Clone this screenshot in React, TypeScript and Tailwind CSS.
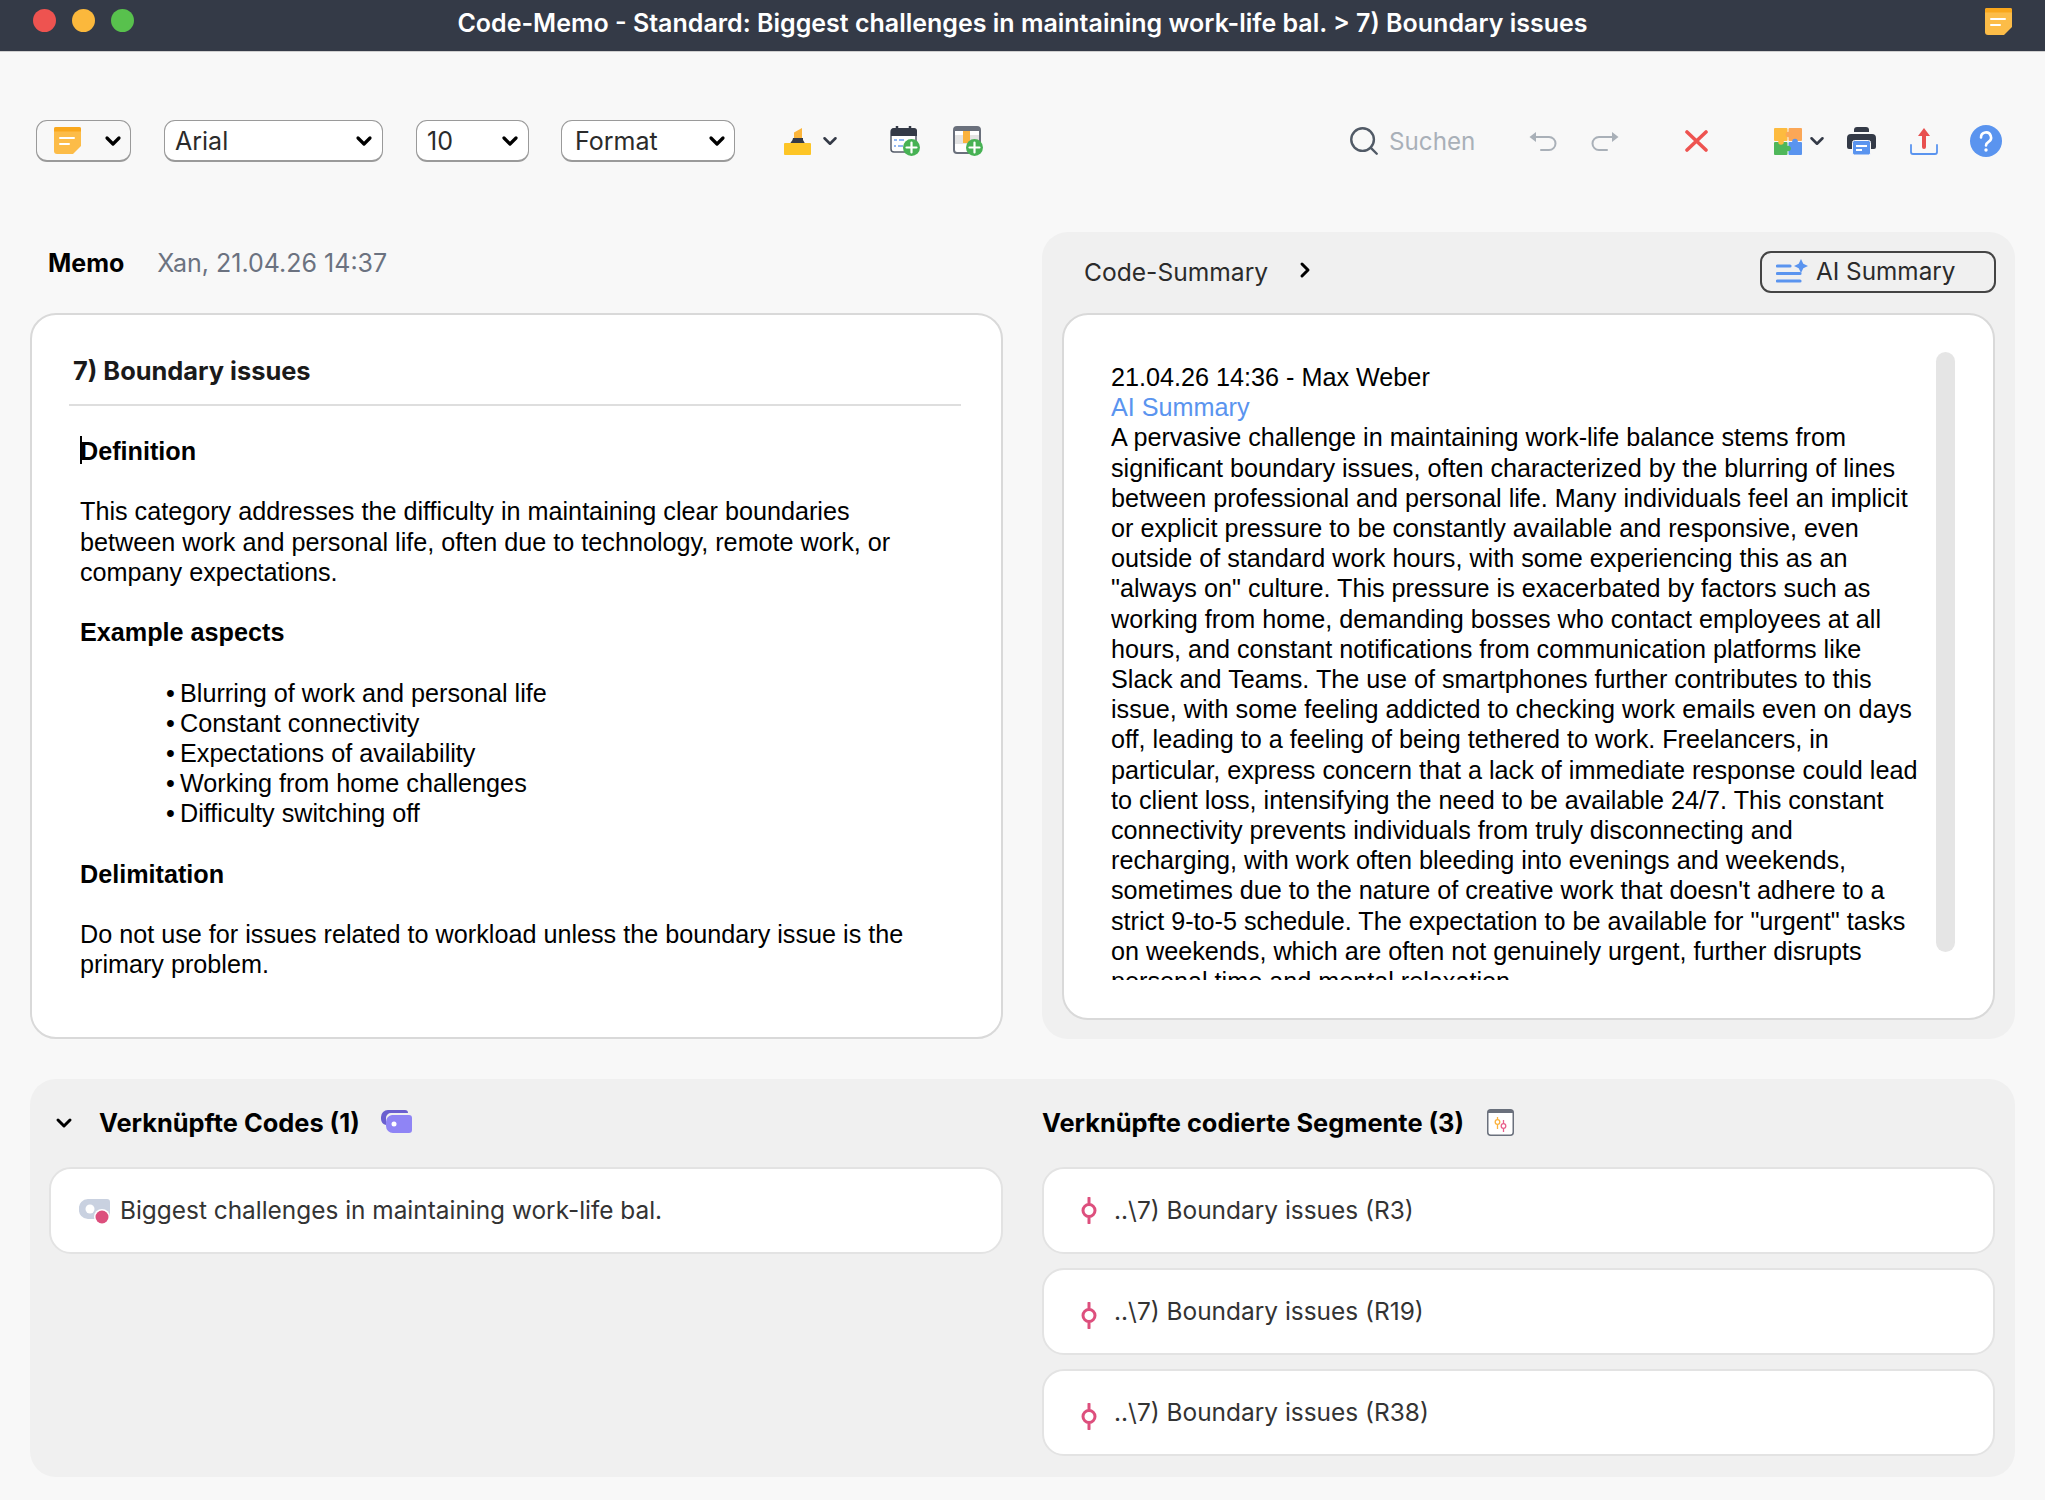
import React from 'react';
import { ChevronDown, ChevronRight, Search } from 'lucide-react';

const NoteIcon = ({ className }: { className?: string }) => (
  <svg viewBox="0 0 27 27" className={className}>
    <path d="M2 0h23a2 2 0 0 1 2 2v17l-8 8H3a3 3 0 0 1-3-3V2a2 2 0 0 1 2-2z" fill="#fcbc48" />
    <path d="M2 0h23a2 2 0 0 1 2 2v2.500H0V2a2 2 0 0 1 2-2z" fill="#f9a71c" />
    <path d="M6 11h14M6 17h9" stroke="#fff" strokeWidth="2" strokeLinecap="round" />
  </svg>
);

const Highlighter = () => (
  <svg viewBox="0 0 27 27" className="w-[27px] h-[27px]">
    <path d="M10 10V4.500L18 0v10z" fill="#fcb53b" />
    <path d="M9 10h10v2l2 3.500H6L8.500 12z" fill="#343a47" />
    <rect x="0" y="15" width="27" height="12" rx="1" fill="#fdc526" />
  </svg>
);

const CalendarAdd = () => (
  <svg viewBox="0 0 30 30" className="w-[30px] h-[30px]">
    <rect x="1" y="3" width="25" height="23" rx="3" fill="#fff" stroke="#555c69" strokeWidth="1.500" />
    <path d="M4 2h20a3 3 0 0 1 3 3v5H1V5a3 3 0 0 1 3-3z" fill="#343a47" />
    <path d="M7 0v4M20 0v4" stroke="#343a47" strokeWidth="2.500" strokeLinecap="round" />
    <path d="M4 14h3M9 14h5M4 20h2M8 20h5" stroke="#6ea0f0" strokeWidth="1.500" />
    <circle cx="21.500" cy="21.500" r="8.500" fill="#47b254" />
    <path d="M21.500 16.500v10M16.500 21.500h10" stroke="#fff" strokeWidth="2.200" strokeLinecap="round" />
  </svg>
);

const WindowAdd = () => (
  <svg viewBox="0 0 30 30" className="w-[30px] h-[30px]">
    <rect x="1" y="1" width="26" height="26" rx="3" fill="#fff" stroke="#6a707c" strokeWidth="2" />
    <rect x="2" y="9" width="24" height="9" fill="#e4e4e4" />
    <rect x="10" y="3" width="7" height="14" fill="#fbb23c" />
    <path d="M4 1h20a3 3 0 0 1 3 3v1H1V4a3 3 0 0 1 3-3z" fill="#6a707c" />
    <circle cx="21.500" cy="21.500" r="8.500" fill="#47b254" />
    <path d="M21.500 16.500v10M16.500 21.500h10" stroke="#fff" strokeWidth="2.200" strokeLinecap="round" />
  </svg>
);

const UndoIcon = ({ flip }: { flip?: boolean }) => (
  <svg viewBox="0 0 28 20" className={flip ? 'w-[28px] h-[20px] -scale-x-100' : 'w-[28px] h-[20px]'}>
    <path d="M0.500 6L7 1v10z" fill="#a9b0b8" />
    <path d="M6 6h14a6.500 6.500 0 0 1 0 13h-8" fill="none" stroke="#a9b0b8" strokeWidth="2" strokeLinecap="round" />
  </svg>
);

const CloseIcon = () => (
  <svg viewBox="0 0 23 22" className="w-[23px] h-[22px]">
    <path d="M2 2l19 18M21 2L2 20" stroke="#ee5350" strokeWidth="3.600" strokeLinecap="round" />
  </svg>
);

const PuzzleIcon = () => (
  <svg viewBox="0 0 28 27" className="w-[28px] h-[27px]">
    <rect x="0" y="0" width="13.500" height="13" rx="1" fill="#fdbb3f" />
    <rect x="14.500" y="0" width="13.500" height="13" rx="1" fill="#fba757" />
    <rect x="0" y="14" width="13.500" height="13" rx="1" fill="#4fb75a" />
    <rect x="14.500" y="14" width="13.500" height="13" rx="1" fill="#5a94ef" />
    <circle cx="14.500" cy="6.500" r="2.800" fill="#fba757" />
    <circle cx="7" cy="14" r="2.800" fill="#fdbb3f" />
    <circle cx="21" cy="13.500" r="2.800" fill="#5a94ef" />
    <circle cx="14" cy="20.500" r="2.800" fill="#4fb75a" />
  </svg>
);

const PrintIcon = () => (
  <svg viewBox="0 0 29 28" className="w-[29px] h-[28px]">
    <path d="M7 3a3 3 0 0 1 3-3h9a3 3 0 0 1 3 3v2H7z" fill="#343a47" />
    <path d="M4 7h21a4 4 0 0 1 4 4v9a2 2 0 0 1-2 2h-4v-7H6v7H2a2 2 0 0 1-2-2v-9a4 4 0 0 1 4-4z" fill="#343a47" />
    <rect x="5.500" y="13.500" width="18" height="14.500" rx="2" fill="#5a94ef" stroke="#f8f8f8" strokeWidth="1" />
    <path d="M9 19h11M9 23h6" stroke="#fff" strokeWidth="1.800" />
  </svg>
);

const UploadIcon = () => (
  <svg viewBox="0 0 28 27" className="w-[28px] h-[27px]">
    <path d="M1 17v7a2 2 0 0 0 2 2h22a2 2 0 0 0 2-2v-7" fill="none" stroke="#5a94ef" strokeWidth="1.800" strokeLinecap="round" />
    <path d="M14 0l6 8h-4v11a2 2 0 0 1-4 0V8H8z" fill="#e8504f" />
  </svg>
);

const HelpIcon = () => (
  <svg viewBox="0 0 32 32" className="w-[32px] h-[32px]">
    <circle cx="16" cy="16" r="16" fill="#5a94ef" />
    <path d="M11 12.500a5 5 0 1 1 7.500 4.300c-1.700 1-2.500 1.900-2.500 3.700" fill="none" stroke="#fff" strokeWidth="2.600" strokeLinecap="round" />
    <circle cx="16" cy="25" r="1.700" fill="#fff" />
  </svg>
);

const SparkLines = () => (
  <svg viewBox="0 0 32 25" className="w-[32px] h-[25px]">
    <path d="M1.500 7H14M1.500 14.500H24M1.500 22H24" stroke="#5a94ef" strokeWidth="3.200" strokeLinecap="round" />
    <path d="M25 0l2.300 4.700L32 7l-4.700 2.300L25 14l-2.300-4.700L18 7l4.700-2.300z" fill="#5a94ef" />
  </svg>
);

const CodesIcon = () => (
  <svg viewBox="0 0 31 23" className="w-[31px] h-[23px]">
    <path d="M7 0h17a3 3 0 0 1 3 3H10a5 5 0 0 0-5 5v7a7 7 0 0 1-5-7V7a7 7 0 0 1 7-7z" fill="#6a5fcf" />
    <path d="M11 5h17a3 3 0 0 1 3 3v12a3 3 0 0 1-3 3H12a7 7 0 0 1-7-7v-4a7 7 0 0 1 6-7z" fill="#8f84f5" />
    <circle cx="13" cy="14" r="2.500" fill="#fff" />
  </svg>
);

const CodeTag = () => (
  <svg viewBox="0 0 31 26" className="w-[31px] h-[26px]">
    <path d="M9 1h19a3 3 0 0 1 3 3v14a3 3 0 0 1-3 3H9A9 9 0 0 1 0 11a9 9 0 0 1 9-10z" fill="#c9d1e0" />
    <circle cx="11" cy="11" r="4.500" fill="#fff" />
    <circle cx="23" cy="19" r="8" fill="#fff" />
    <circle cx="23" cy="19" r="6.500" fill="#dc4f7d" />
  </svg>
);

const SegmentPin = ({ className }: { className?: string }) => (
  <svg viewBox="0 0 16 27" className={`w-[16px] h-[27px] ${className ?? ''}`}>
    <path d="M8 1v5M8 21v5" stroke="#dd4f7d" strokeWidth="3" strokeLinecap="round" />
    <circle cx="8" cy="13.500" r="6" fill="none" stroke="#dd4f7d" strokeWidth="3" />
  </svg>
);

const SegmentsIcon = () => (
  <svg viewBox="0 0 27 27" className="w-[27px] h-[27px]">
    <rect x="0.750" y="0.750" width="25.500" height="25.500" rx="3" fill="#fff" stroke="#6a707c" strokeWidth="1.500" />
    <path d="M3 0.750h21a2.500 2.500 0 0 1 2.250 2.250v1H0.750V3A2.500 2.500 0 0 1 3 0.750z" fill="#6a707c" />
    <path d="M10.500 8v12" stroke="#fbb23c" strokeWidth="1.300" />
    <circle cx="10.500" cy="13" r="2.300" fill="#fff" stroke="#fbb23c" strokeWidth="1.300" />
    <path d="M16.500 11v12" stroke="#e8608b" strokeWidth="1.300" />
    <circle cx="16.500" cy="17" r="2.300" fill="#fff" stroke="#e8608b" strokeWidth="1.300" />
  </svg>
);

const summaryLines = [
  'A pervasive challenge in maintaining work-life balance stems from',
  'significant boundary issues, often characterized by the blurring of lines',
  'between professional and personal life. Many individuals feel an implicit',
  'or explicit pressure to be constantly available and responsive, even',
  'outside of standard work hours, with some experiencing this as an',
  '"always on" culture. This pressure is exacerbated by factors such as',
  'working from home, demanding bosses who contact employees at all',
  'hours, and constant notifications from communication platforms like',
  'Slack and Teams. The use of smartphones further contributes to this',
  'issue, with some feeling addicted to checking work emails even on days',
  'off, leading to a feeling of being tethered to work. Freelancers, in',
  'particular, express concern that a lack of immediate response could lead',
  'to client loss, intensifying the need to be available 24/7. This constant',
  'connectivity prevents individuals from truly disconnecting and',
  'recharging, with work often bleeding into evenings and weekends,',
  "sometimes due to the nature of creative work that doesn't adhere to a",
  'strict 9-to-5 schedule. The expectation to be available for "urgent" tasks',
  'on weekends, which are often not genuinely urgent, further disrupts',
  'personal time and mental relaxation.',
];

const aspects = [
  'Blurring of work and personal life',
  'Constant connectivity',
  'Expectations of availability',
  'Working from home challenges',
  'Difficulty switching off',
];

const Dropdown = ({ label, className }: { label: string; className: string }) => (
  <div className={`h-[42px] flex items-center justify-between bg-white rounded-[11px] border border-[#9a9a9a] border-b-2 text-[25px] text-[#2b2b2b] ${className}`}>
    <span className="mt-[2px]">{label}</span>
    <ChevronDown className="w-[24px] h-[24px] text-black" strokeWidth={3.200} />
  </div>
);

export default function App() {
  return (
    <div className="w-[2045px] h-[1500px] bg-[#f8f8f8] font-['Inter',sans-serif] overflow-hidden">
      {/* title bar */}
      <div className="relative h-[52px] bg-[#343a47] border-b border-[#d0d0d0] flex items-center justify-center">
        <div className="absolute left-[33px] top-[9px] flex gap-[16px]">
          <span className="w-[23px] h-[23px] rounded-full bg-[#ee5350]" />
          <span className="w-[23px] h-[23px] rounded-full bg-[#fbb83c]" />
          <span className="w-[23px] h-[23px] rounded-full bg-[#58c14d]" />
        </div>
        <span className="-mt-[3px] text-[25px] font-semibold text-white whitespace-nowrap">
          Code-Memo - Standard: Biggest challenges in maintaining work-life bal. &gt; 7) Boundary issues
        </span>
        <NoteIcon className="absolute left-[1985px] top-[8px] w-[27px] h-[27px]" />
      </div>

      {/* toolbar */}
      <div className="h-[180px] pb-[2px] flex items-center pl-[36px]">
        <div className="w-[95px] h-[42px] flex items-center bg-[#f8f8f8] rounded-[11px] border border-[#9a9a9a] border-b-2 pl-[17px]">
          <NoteIcon className="w-[27px] h-[27px]" />
          <ChevronDown className="ml-[20px] w-[24px] h-[24px] text-black" strokeWidth={3.200} />
        </div>
        <Dropdown label="Arial" className="ml-[33px] w-[219px] pl-[10px] pr-[6px]" />
        <Dropdown label="10" className="ml-[33px] w-[113px] pl-[10px] pr-[6px]" />
        <Dropdown label="Format" className="ml-[32px] w-[174px] pl-[13px] pr-[5px]" />
        <div className="ml-[49px]"><Highlighter /></div>
        <ChevronDown className="ml-[8px] w-[22px] h-[22px] text-[#343a47]" strokeWidth={2.800} />
        <div className="ml-[49px]"><CalendarAdd /></div>
        <div className="ml-[33px]"><WindowAdd /></div>
        <Search className="ml-[364px] w-[34px] h-[34px] text-[#515a66]" strokeWidth={1.700} />
        <span className="ml-[8px] mt-[2px] text-[24.200px] text-[#a9b0b8]">Suchen</span>
        <div className="ml-[54px]"><UndoIcon /></div>
        <div className="ml-[34px]"><UndoIcon flip /></div>
        <div className="ml-[66px]"><CloseIcon /></div>
        <div className="ml-[66px]"><PuzzleIcon /></div>
        <ChevronDown className="ml-[4px] w-[22px] h-[22px] text-[#343a47]" strokeWidth={2.800} />
        <div className="ml-[19px]"><PrintIcon /></div>
        <div className="ml-[34px]"><UploadIcon /></div>
        <div className="ml-[32px]"><HelpIcon /></div>
      </div>

      {/* memo + summary */}
      <div className="px-[30px] grid grid-cols-[973px_973px] gap-x-[39px]">
        <div className="h-[807px]">
          <div className="h-[81px] pt-[13px] pl-[18px] flex items-baseline gap-[33px]">
            <span className="text-[25px] font-bold text-black">Memo</span>
            <span className="text-[25px] text-[#6b7280]">Xan, 21.04.26 14:37</span>
          </div>
          <div className="h-[726px] bg-white rounded-[26px] border-2 border-[#d9d9d9] pt-[38px]">
            <div className="pl-[41px] text-[25.400px] leading-[36px] font-bold text-[#1a1a1a]">7) Boundary issues</div>
            <div className="mt-[15px] ml-[37px] w-[892px] border-t-2 border-[#dedede]" />
            <div className="mt-[30px] pl-[48px] font-['Liberation_Sans',Arial,sans-serif] text-[25.200px] leading-[30.200px] text-black">
              <p className="font-bold"><span className="inline-block w-[2px] h-[28px] -mr-[2px] bg-black align-top" />Definition</p>
              <p className="mt-[30.200px] whitespace-nowrap">This category addresses the difficulty in maintaining clear boundaries<br />between work and personal life, often due to technology, remote work, or<br />company expectations.</p>
              <p className="mt-[30.200px] font-bold">Example aspects</p>
              <ul className="mt-[30.200px] pl-[86px]">
                {aspects.map(a => (
                  <li key={a} className="flex"><span className="w-[14px]">•</span>{a}</li>
                ))}
              </ul>
              <p className="mt-[30.200px] font-bold">Delimitation</p>
              <p className="mt-[30.200px] whitespace-nowrap">Do not use for issues related to workload unless the boundary issue is the<br />primary problem.</p>
            </div>
          </div>
        </div>

        <div className="h-[807px] bg-[#f0f0f0] rounded-[26px] px-[20px]">
          <div className="h-[81px] flex items-center">
            <span className="ml-[22px] text-[24.600px] text-[#2b2b2b]">Code-Summary</span>
            <ChevronRight className="ml-[25px] -mt-[5px] w-[24px] h-[24px] text-black" strokeWidth={3} />
            <div className="ml-auto mr-[-1px] mb-[2px] w-[236px] h-[42px] flex items-center pl-[14px] gap-[8px] rounded-[11px] border-2 border-[#444] text-[24.300px] text-[#2b2b2b]">
              <SparkLines />
              <span>AI Summary</span>
            </div>
          </div>
          <div className="h-[707px] bg-white rounded-[26px] border-2 border-[#d9d9d9] flex items-start">
            <div className="ml-[47px] mt-[47px] w-[825px] h-[618px] overflow-hidden font-['Liberation_Sans',Arial,sans-serif] text-[25.200px] leading-[30.200px] text-black">
              <div>21.04.26 14:36 - Max Weber</div>
              <div className="text-[#5a94ef]">AI Summary</div>
              {summaryLines.map(line => (
                <div key={line} className="whitespace-nowrap">{line}</div>
              ))}
            </div>
            <div className="mt-[37px] w-[19px] h-[600px] rounded-full bg-[#e5e5e5]" />
          </div>
        </div>
      </div>

      {/* linked codes + segments */}
      <div className="mt-[40px] mx-[30px] w-[1985px] h-[398px] bg-[#f0f0f0] rounded-[26px] grid grid-cols-[973px_973px] gap-x-[39px]">
        <div>
          <div className="h-[88px] flex items-center pl-[22px]">
            <ChevronDown className="w-[24px] h-[24px] text-black" strokeWidth={3} />
            <span className="ml-[23px] text-[25.400px] font-bold text-black">Verknüpfte Codes (1)</span>
            <div className="ml-[21px] -mt-[4px]"><CodesIcon /></div>
          </div>
          <div className="ml-[19px] h-[87px] bg-white rounded-[22px] border-2 border-[#e3e3e3] flex items-center pl-[28px] gap-[10px] text-[24.400px] text-[#333]">
            <CodeTag />
            <span>Biggest challenges in maintaining work-life bal.</span>
          </div>
        </div>
        <div>
          <div className="h-[88px] flex items-center">
            <span className="text-[25.400px] font-bold text-black">Verknüpfte codierte Segmente (3)</span>
            <div className="ml-[23px] -mt-[2px]"><SegmentsIcon /></div>
          </div>
          <div className="flex flex-col gap-[14px] w-[953px]">
            {['R3', 'R19', 'R38'].map((r, i) => (
              <div key={r} className="h-[87px] bg-white rounded-[22px] border-2 border-[#e3e3e3] flex items-center pl-[37px] gap-[17px] text-[24.450px] text-[#333]">
                <SegmentPin className={i > 0 ? 'mt-[8px]' : ''} />
                <span>..\7) Boundary issues ({r})</span>
              </div>
            ))}
          </div>
        </div>
      </div>
    </div>
  );
}
